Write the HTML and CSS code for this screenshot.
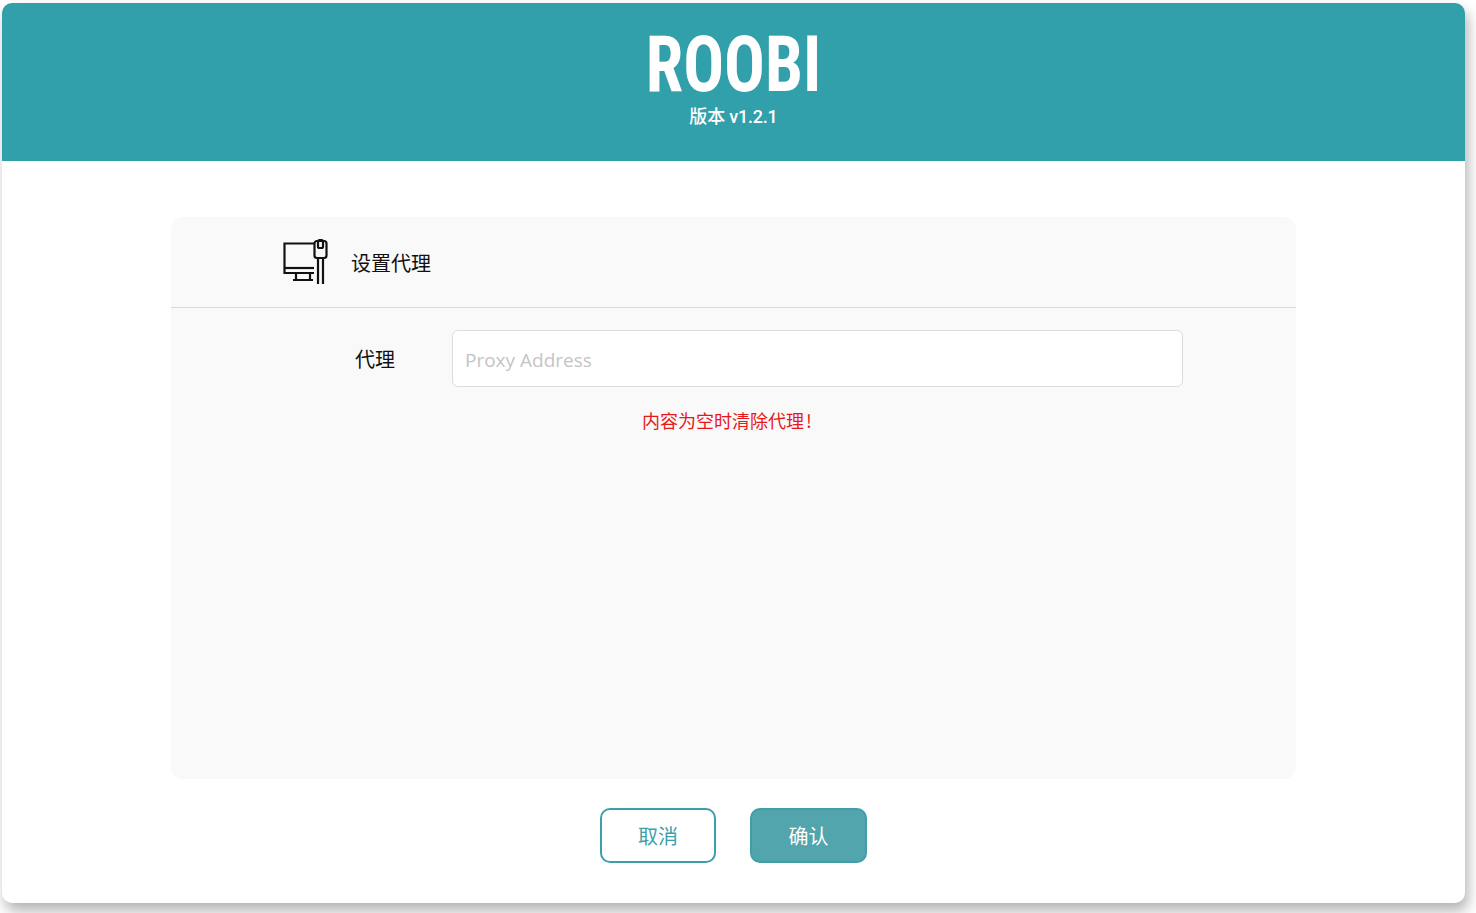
FILE: index.html
```html
<!DOCTYPE html>
<html lang="zh-CN">
<head>
  <meta charset="UTF-8" />
  <title>ROOBI</title>
  <link rel="stylesheet" href="styles.css">
</head>
<body>
  <div class="window">
    <div class="header">
      <div class="logo">ROOBI</div>
      <div class="version">版本 v1.2.1</div>
    </div>
    <div class="content">
      <div class="panel">
        <div class="panel-title">
          <svg class="panel-icon" width="46" height="46" viewBox="0 0 46 46" fill="none" stroke="#111" stroke-width="2.2">
            <path d="M31 5.5H1.5V35H31" />
            <path d="M1.5 30H31" />
            <path d="M13 35v7M27 35v7M10 42h20" />
            <rect x="31.5" y="3" width="12" height="17" rx="2.5" />
            <rect x="35" y="2" width="5" height="8" rx="1.5" />
            <path d="M35 20v26M40 20v26" />
          </svg>
          <span class="panel-name">设置代理</span>
        </div>
        <div class="form-row">
          <label class="form-label" for="proxy">代理</label>
          <input class="form-input" id="proxy" type="text" placeholder="Proxy Address" />
        </div>
        <div class="hint">内容为空时清除代理<span class="bang">!</span></div>
      </div>
      <div class="actions">
        <button class="btn btn-cancel">取消</button>
        <button class="btn btn-ok">确认</button>
      </div>
    </div>
  </div>
</body>
</html>
```

FILE: styles.css
```css
* {
  box-sizing: border-box;
}

body {
  margin: 0;
  height: 913px;
  overflow: hidden;
  background: #fff;
  font-family: "Noto Sans CJK SC", "Noto Sans", sans-serif;
  padding: 3px 11px 10px 2px;
}

.window {
  height: 900px;
  background: #fff;
  border-radius: 10px;
  overflow: hidden;
  box-shadow: 3px 8px 14px rgba(0, 0, 0, 0.3);
  display: flex;
  flex-direction: column;
}

.header {
  height: 158px;
  background: #32a0ab;
  color: #fff;
  text-align: center;
  padding-top: 24px;
}

.logo {
  font-family: "Roboto", sans-serif;
  font-stretch: condensed;
  font-size: 77px;
  line-height: 76px;
  font-weight: 700;
  transform: scaleX(0.88);
}

.version {
  font-family: "Roboto", "Noto Sans CJK SC", sans-serif;
  font-size: 18px;
  font-weight: 500;
  letter-spacing: -0.2px;
  line-height: 24px;
  margin-top: 2px;
}

.content {
  flex: 1;
  padding: 56px 169px 0;
}

.panel {
  height: 562px;
  background: #f9f9f9;
  border-radius: 12px;
}

.panel-title {
  height: 91px;
  border-bottom: 1px solid #d9d9d9;
  display: flex;
  align-items: center;
  padding: 0 0 2px 112px;
  font-size: 20px;
  color: #111;
}

.panel-icon {
  margin-right: 22px;
}

.panel-name {
  margin-top: 2px;
}

.form-row {
  display: flex;
  align-items: center;
  margin-top: 22px;
  padding-left: 184px;
}

.form-label {
  width: 97px;
  font-size: 20px;
  color: #111;
}

.form-input {
  width: 731px;
  height: 57px;
  padding: 2px 13px 0 12px;
  background: #fff;
  border: 1px solid #dcdcdc;
  border-radius: 6px;
  font-family: "Open Sans", sans-serif;
  font-size: 19px;
  outline: none;
}

.form-input::placeholder {
  color: #c4c4c4;
}

.hint {
  margin-top: 20px;
  padding-right: 13px;
  text-align: center;
  font-size: 18px;
  line-height: 26px;
  color: #e81818;
}

.bang {
  margin-left: 2px;
}

.actions {
  display: flex;
  justify-content: center;
  gap: 34px;
  margin-top: 29px;
}

.btn {
  height: 55px;
  border-radius: 10px;
  font-family: inherit;
  font-size: 20px;
  cursor: pointer;
}

.btn-cancel {
  width: 116px;
  background: #fff;
  border: 2px solid #3d9fa9;
  color: #3d9fa9;
}

.btn-ok {
  width: 117px;
  background: #52a5ac;
  border: 2px solid #3f9ea8;
  color: #fff;
}
```
